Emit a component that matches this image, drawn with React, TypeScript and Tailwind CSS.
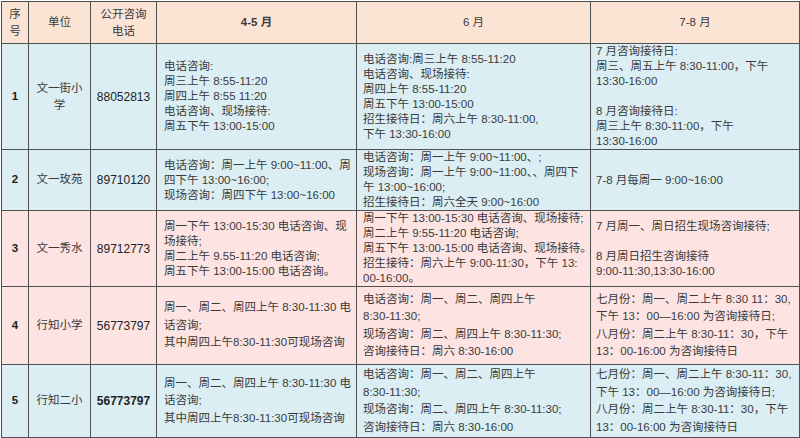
import React from 'react'

type Row = {
  no: string
  unit: string
  phone: string
  bg: string
  height: string
  lh: string
  phoneBold?: boolean
  m45: string[]
  m6: string[]
  m78: string[]
}

const rows: Row[] = [
  {
    no: '1',
    unit: '文一街小学',
    phone: '88052813',
    bg: 'bg-[#daeef3]',
    height: 'h-[105px]',
    lh: 'leading-[15px]',
    m45: ['电话咨询:', '周三上午 8:55-11:20', '周四上午 8:55 11:20', '电话咨询、现场接待:', '周五下午 13:00-15:00'],
    m6: [
      '电话咨询:周三上午 8:55-11:20',
      '电话咨询、现场接待:',
      '周四上午 8:55-11:20',
      '周五下午 13:00-15:00',
      '招生接待日：周六上午 8:30-11:00,',
      '下午 13:30-16:00'
    ],
    m78: ['7 月咨询接待日:', '周三、周五上午 8:30-11:00，下午', '13:30-16:00', '', '8 月咨询接待日:', '周三上午 8:30-11:00，下午', '13:30-16:00']
  },
  {
    no: '2',
    unit: '文一玫苑',
    phone: '89710120',
    bg: 'bg-[#daeef3]',
    height: 'h-[61px]',
    lh: 'leading-[15px]',
    m45: ['电话咨询：周一上午 9:00~11:00、周', '四下午 13:00~16:00;', '现场咨询：周四下午 13:00~16:00'],
    m6: ['电话咨询：周一上午 9:00~11:00、;', '现场咨询：周一上午 9:00~11:00、、周四下', '午 13:00~16:00;', '招生接待日：周六全天 9:00~16:00'],
    m78: ['7-8 月每周一 9:00~16:00']
  },
  {
    no: '3',
    unit: '文一秀水',
    phone: '89712773',
    bg: 'bg-[#fde4e2]',
    height: 'h-[75px]',
    lh: 'leading-[15px]',
    m45: ['周一下午 13:00-15:30 电话咨询、现', '场接待;', '周二上午 9.55-11:20 电话咨询;', '周五下午 13:00-15:00 电话咨询。'],
    m6: [
      '周一下午 13:00-15:30 电话咨询、现场接待;',
      '周二上午 9:55-11:20 电话咨询;',
      '周五下午 13:00-15:00 电话咨询、现场接待。',
      '招生接待：周六上午 9:00-11:30，下午 13:',
      '00-16:00。'
    ],
    m78: ['7 月周一、周日招生现场咨询接待;', '', '8 月周日招生咨询接待', '9:00-11:30,13:30-16:00']
  },
  {
    no: '4',
    unit: '行知小学',
    phone: '56773797',
    bg: 'bg-[#fde4e2]',
    height: 'h-[78px]',
    lh: 'leading-[17.5px]',
    m45: ['周一、周二、周四上午 8:30-11:30 电', '话咨询;', '其中周四上午8:30-11:30可现场咨询'],
    m6: ['电话咨询：周一、周二、周四上午', '8:30-11:30;', '现场咨询：周二、周四上午 8:30-11:30;', '咨询接待日：周六 8:30-16:00'],
    m78: ['七月份：周一、周二上午 8:30 11：30,', '下午 13：00—16:00 为咨询接待日;', '八月份：周二上午 8:30-11：30，下午', '13：00-16:00 为咨询接待日']
  },
  {
    no: '5',
    unit: '行知二小',
    phone: '56773797',
    phoneBold: true,
    bg: 'bg-[#daeef3]',
    height: 'h-[73px]',
    lh: 'leading-[17.5px]',
    m45: ['周一、周二、周四上午 8:30-11:30 电', '话咨询;', '其中周四上午8:30-11:30可现场咨询'],
    m6: ['电话咨询：周一、周二、周四上午', '8:30-11:30;', '现场咨询：周二、周四上午 8:30-11:30;', '咨询接待日：周六 8:30-16:00'],
    m78: ['七月份：周一、周二上午 8:30-11：30,', '下午 13：00—16:00 为咨询接待日;', '八月份：周二上午 8:30-11：30，下午', '13：00-16:00 为咨询接待日']
  }
]

const cell = 'border border-[#505050] align-middle'

const Lines = ({ lines, lh }: { lines: string[]; lh: string }) => (
  <div className={`whitespace-nowrap ${lh}`}>
    {lines.map((l, i) => (
      <div key={i}>{l === '' ? '\u00a0' : l}</div>
    ))}
  </div>
)

export default function App() {
  return (
    <main
      className="w-[800px] h-[438px] bg-white overflow-hidden text-[#3a3a3a] text-[11.5px]"
      style={{ fontFamily: '"Liberation Sans", "Noto Sans CJK SC", sans-serif' }}
    >
      <table className="table-fixed border-collapse w-[798px] mt-[1px] ml-[1px]">
        <colgroup>
          <col className="w-[27px]" />
          <col className="w-[62px]" />
          <col className="w-[66px]" />
          <col className="w-[200px]" />
          <col className="w-[234px]" />
          <col className="w-[209px]" />
        </colgroup>
        <thead>
          <tr className="h-[42px] bg-[#fce4d4]">
            <th className={`${cell} font-normal leading-[17px] px-0`}>
              序<br />号
            </th>
            <th className={`${cell} font-normal`}>单位</th>
            <th className={`${cell} font-normal leading-[17px]`}>
              公开咨询
              <br />
              电话
            </th>
            <th className={`${cell} font-bold`}>4-5 月</th>
            <th className={`${cell} font-normal`}>6 月</th>
            <th className={`${cell} font-normal`}>7-8 月</th>
          </tr>
        </thead>
        <tbody>
          {rows.map((r) => (
            <tr key={r.no} className={`${r.bg} ${r.height}`}>
              <td className={`${cell} text-center font-bold text-[#222]`}>{r.no}</td>
              <td className={`${cell} text-center`}>
                {r.unit.length > 4 ? (
                  <div className="leading-[17px]">
                    {r.unit.slice(0, 4)}
                    <br />
                    {r.unit.slice(4)}
                  </div>
                ) : (
                  r.unit
                )}
              </td>
              <td className={`${cell} text-center text-[#222] text-[12px] ${r.phoneBold ? 'font-bold' : ''}`}>{r.phone}</td>
              <td className={`${cell} pl-[7px] pr-1`}>
                <Lines lines={r.m45} lh={r.lh} />
              </td>
              <td className={`${cell} pl-[6px] pr-1`}>
                <Lines lines={r.m6} lh={r.lh} />
              </td>
              <td className={`${cell} pl-[5px] pr-1`}>
                <Lines lines={r.m78} lh={r.lh} />
              </td>
            </tr>
          ))}
        </tbody>
      </table>
    </main>
  )
}
